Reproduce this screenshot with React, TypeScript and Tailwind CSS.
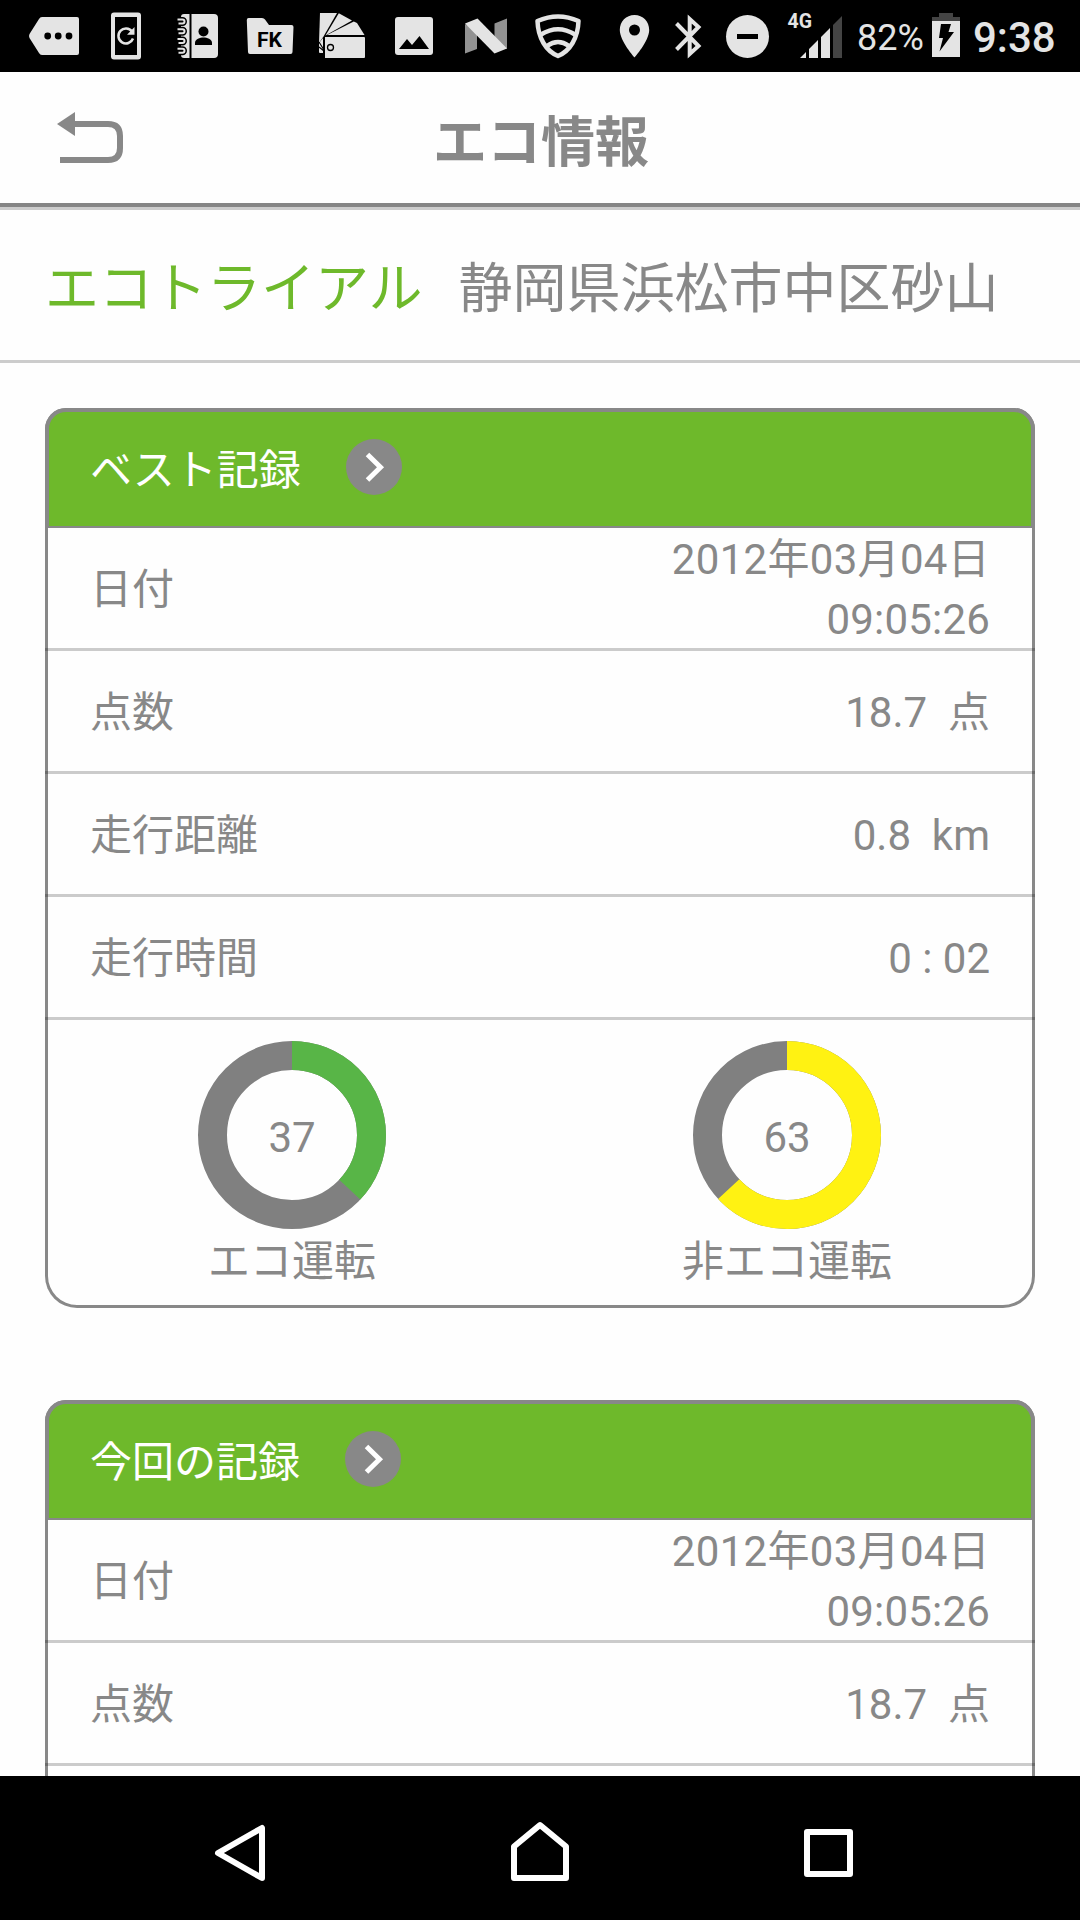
import type { ReactNode } from 'react';

const records = [
  { title: 'ベスト記録', date: '2012年03月04日', time: '09:05:26', score: '18.7', distance: '0.8', duration: '0 : 02', eco: 37 },
  { title: '今回の記録', date: '2012年03月04日', time: '09:05:26', score: '18.7', distance: '0.8', duration: '0 : 02', eco: 37 },
];

// Each slot is a slice of the 72px high bar, starting at x.
function Slot({ x, w, children }: { x: number; w: number; children: ReactNode }) {
  return (
    <svg width={w} height={72} viewBox={`${x} 0 ${w} 72`} fill="#e4e4e4" className="shrink-0">
      {children}
    </svg>
  );
}

function StatusBar() {
  return (
    <div className="flex h-[72px] shrink-0 items-center bg-black text-[#e4e4e4]">
      <Slot x={0} w={95}>
        <path d="M42 17H77a2 2 0 0 1 2 2V53a2 2 0 0 1-2 2H42q-2 0-3-2L29.500 38q-1-2 0-4L39 19q1-2 3-2Z" />
        <g fill="#000">
          <circle cx="47.700" cy="36" r="3.400" />
          <circle cx="58.200" cy="36" r="3.400" />
          <circle cx="69" cy="36" r="3.400" />
        </g>
      </Slot>
      <Slot x={95} w={65}>
        <path fillRule="evenodd" d="M114 12.500H138a3 3 0 0 1 3 3V56.500a3 3 0 0 1-3 3H114a3 3 0 0 1-3-3V15.500a3 3 0 0 1 3-3ZM115 17V55H137V17Z" />
        <path d="M132 31.500A7.500 7.500 0 1 0 133 38.500" fill="none" stroke="#e4e4e4" strokeWidth="2.500" />
        <path d="M134.500 27V34.700H127Z" />
      </Slot>
      <Slot x={160} w={72}>
        <path d="M184 14H214a4 4 0 0 1 4 4V54a4 4 0 0 1-4 4H184a3 3 0 0 1-3-3V17a3 3 0 0 1 3-3Z" />
        <path d="M190.500 14V58" stroke="#000" strokeWidth="2" />
        {[21.500, 31.300, 41, 50.800].map((y) => (
          <g key={y} fill="none">
            <path d={`M177 ${y - 2}H182.500a2 2 0 0 1 0 4H177`} stroke="#000" strokeWidth="5" />
            <path d={`M177.500 ${y - 2}H182.500a2 2 0 0 1 0 4H178.500`} stroke="#e4e4e4" strokeWidth="2" />
          </g>
        ))}
        <circle cx="203.500" cy="31.500" r="5" fill="#000" />
        <path d="M195 45V43c0-4 5-5.500 8.500-5.500S212 39 212 43V45Z" fill="#000" />
      </Slot>
      <Slot x={232} w={74}>
        <path d="M249 18H262q2 0 3 1.500L269 25H291.500a2 2 0 0 1 2 2L292.500 52a2 2 0 0 1-2 2H250a2 2 0 0 1-2-2L246.800 20a2 2 0 0 1 2.200-2Z" />
        <text x="257" y="46.500" fill="#000" fontSize="21" fontWeight="700" textLength="25" lengthAdjust="spacingAndGlyphs" className="font-[Roboto,sans-serif]">
          FK
        </text>
      </Slot>
      <Slot x={306} w={74}>
        <path d="M320 13H337L323.500 36.500 319 43Z" />
        <path d="M338.800 13.200 352 20.500 325.500 35.500Z" />
        <path d="M353.800 21.500 357 23 364.500 35H327Z" />
        <path d="M325 37H364a1 1 0 0 1 1 1V57a1 1 0 0 1-1 1H325Z" />
        <path d="M319 43 323 38V53H320q-1 0-1-1Z" />
        <path d="M319 47 324 51M319 42 324 50" stroke="#000" strokeWidth="1.200" />
        <circle cx="330.500" cy="47.500" r="3" fill="none" stroke="#000" strokeWidth="1.300" />
      </Slot>
      <Slot x={380} w={69}>
        <rect x="395" y="17" width="38" height="38" rx="3" />
        <path d="M399 49 407 39 412 45 419.500 36 429 49Z" fill="#000" />
      </Slot>
      <Slot x={449} w={72}>
        <path d="M465 24 477 32V49L465 53.500ZM494.500 23.500 507 18.500V49L494.500 39Z" fill="#929292" />
        <path d="M465 23.500 477.500 18.500 507 48.500 494.500 53.500Z" />
      </Slot>
      <Slot x={521} w={79}>
        <g fill="none" stroke="#e4e4e4" strokeWidth="4.500" strokeLinejoin="round">
          <path d="M537.500 21Q558 12 578.500 21C578 38 570 51 558 56 546 51 538 38 537.500 21Z" />
          <path d="M541 34.500Q558 24 575 34.500M547 46Q558 38 569 46" />
        </g>
      </Slot>
      <Slot x={600} w={62}>
        <path fillRule="evenodd" d="M634.500 15C626 15 619.800 21.500 619.800 30 619.800 41 634.500 57.500 634.500 57.500S649.200 41 649.200 30C649.200 21.500 643 15 634.500 15Zm0 9.500a5.500 5.500 0 1 1 0 11 5.500 5.500 0 0 1 0-11Z" />
      </Slot>
      <Slot x={662} w={53}>
        <path d="M676.500 23.500 698.500 46 689.700 54V19L698.500 27 676.500 49.500" fill="none" stroke="#e4e4e4" strokeWidth="4" />
      </Slot>
      <Slot x={715} w={65}>
        <circle cx="747.500" cy="36.500" r="21.500" />
        <path d="M737 34H758V39H737Z" fill="#000" />
      </Slot>
      <Slot x={780} w={77}>
        <text x="787.500" y="27.500" fontSize="19.500" fontWeight="700" className="font-[Roboto,sans-serif]">
          4G
        </text>
        <path d="M800 58 806 52V58ZM809 49 818 40V58H809ZM821 37 830 28V58H821Z" />
        <path d="M833 25 842 16V58H833Z" fill="#444" />
      </Slot>
      <span className="w-[75px] pt-[3px] text-[36px] leading-[72px]">82%</span>
      <Slot x={932} w={41}>
        <path d="M939 13H953V17H960V21H932V17H939Z" fill="#444" />
        <path d="M932 21H960V57H932Z" />
        <path d="M941 24H951L948.500 32H954L939.500 51.500 943 38H939Z" fill="#000" />
      </Slot>
      <span className="pt-[3px] text-[42px] leading-[72px] font-medium">9:38</span>
    </div>
  );
}

function Donut({ value, color, label }: { value: number; color: string; label: string }) {
  const r = 79.5;
  const length = 2 * Math.PI * r;
  return (
    <div className="flex flex-1 flex-col items-center pt-[21px] pr-px">
      <div className="relative size-[188px]">
        <svg viewBox="0 0 188 188" className="size-full -rotate-90" fill="none" strokeWidth="29">
          <circle cx="94" cy="94" r={r} stroke="#808080" />
          <circle cx="94" cy="94" r={r} stroke={color} strokeDasharray={`${(length * value) / 100} ${length}`} />
        </svg>
        <span className="absolute inset-0 flex items-center justify-center pt-1">{value}</span>
      </div>
      <span className="pt-[3px] leading-[60px]">{label}</span>
    </div>
  );
}

function Row({ label, children }: { label: string; children: ReactNode }) {
  return (
    <div className="flex h-[123px] items-center justify-between border-b-3 border-black/20 px-[45px] pt-[3px]">
      <span>{label}</span>
      <span className="text-right leading-[60px] whitespace-pre">{children}</span>
    </div>
  );
}

function RecordCard({ record }: { record: (typeof records)[number] }) {
  return (
    <section className="h-[900px] shrink-0 rounded-t-[21px] rounded-b-[32px] text-[42px] shadow-[inset_0_0_0_3px_#888]">
      <div className="flex h-[120px] items-center gap-[45px] rounded-t-[21px] border-4 border-b-2 border-[#888] bg-[#6eb92b] pl-[41px] text-white">
        <h2 className="pt-0.5">{record.title}</h2>
        <svg width="56" height="56" viewBox="0 0 56 56" className="-mt-1">
          <circle cx="28" cy="28" r="28" fill="#888" />
          <path d="M21.500 15.500 34.500 28.200 21.500 41" fill="none" stroke="#fff" strokeWidth="5" />
        </svg>
      </div>
      <Row label="日付">
        <span className="tracking-[0.3px]">{record.date}</span>
        <br />
        <span className="tracking-[0.2px]">{record.time}</span>
      </Row>
      <Row label="点数">{record.score + '  点'}</Row>
      <Row label="走行距離">{record.distance + '  km'}</Row>
      <Row label="走行時間">{record.duration}</Row>
      <div className="flex">
        <Donut value={record.eco} color="#58b547" label="エコ運転" />
        <Donut value={100 - record.eco} color="#fff212" label="非エコ運転" />
      </div>
    </section>
  );
}

function NavBar() {
  return (
    <nav className="flex h-[144px] shrink-0 items-center justify-between bg-black px-[210px]">
      <svg width="60" height="72" viewBox="210 1812 60 72" fill="none" stroke="#fff" strokeWidth="6" strokeLinejoin="round">
        <path d="M218 1853 262 1828V1878Z" />
      </svg>
      <svg width="60" height="72" viewBox="510 1812 60 72" fill="none" stroke="#fff" strokeWidth="6" strokeLinejoin="round">
        <path d="M514 1846.500 540 1825 566 1846.500V1878H514Z" />
      </svg>
      <svg width="60" height="72" viewBox="810 1812 60 72" fill="none" stroke="#fff" strokeWidth="6" strokeLinejoin="round" className="overflow-visible">
        <path d="M807 1832H850V1874H807Z" />
      </svg>
    </nav>
  );
}

export default function App() {
  return (
    <div className="flex h-[1920px] w-[1080px] flex-col overflow-hidden bg-[#fefefe] font-[Roboto,'Noto_Sans_CJK_JP',sans-serif] text-[#888]">
      <StatusBar />
      <header className="flex h-[135px] shrink-0 items-center border-b-4 border-[#858585]">
        <svg width="180" height="60" viewBox="0 108 180 60" className="shrink-0">
          <path d="M57 124 75 112V136Z" fill="#888" />
          <path d="M70 124H108Q120 124 120 136V148Q120 160 108 160H60" fill="none" stroke="#888" strokeWidth="6" />
        </svg>
        <h1 className="flex-1 pt-3 pl-0.5 text-center text-[54px] font-bold">エコ情報</h1>
        <div className="w-[180px]" />
      </header>
      <div className="flex h-[156px] shrink-0 items-center gap-[36px] border-y-3 border-[#ccc] px-[45px] pt-2 text-[54px] whitespace-nowrap">
        <span className="text-[#6eb92b]">エコトライアル</span>
        <span>静岡県浜松市中区砂山</span>
      </div>
      <main className="flex min-h-0 flex-1 flex-col gap-[92px] overflow-hidden px-[45px] pt-[45px]">
        {records.map((record) => (
          <RecordCard key={record.title} record={record} />
        ))}
      </main>
      <NavBar />
    </div>
  );
}
